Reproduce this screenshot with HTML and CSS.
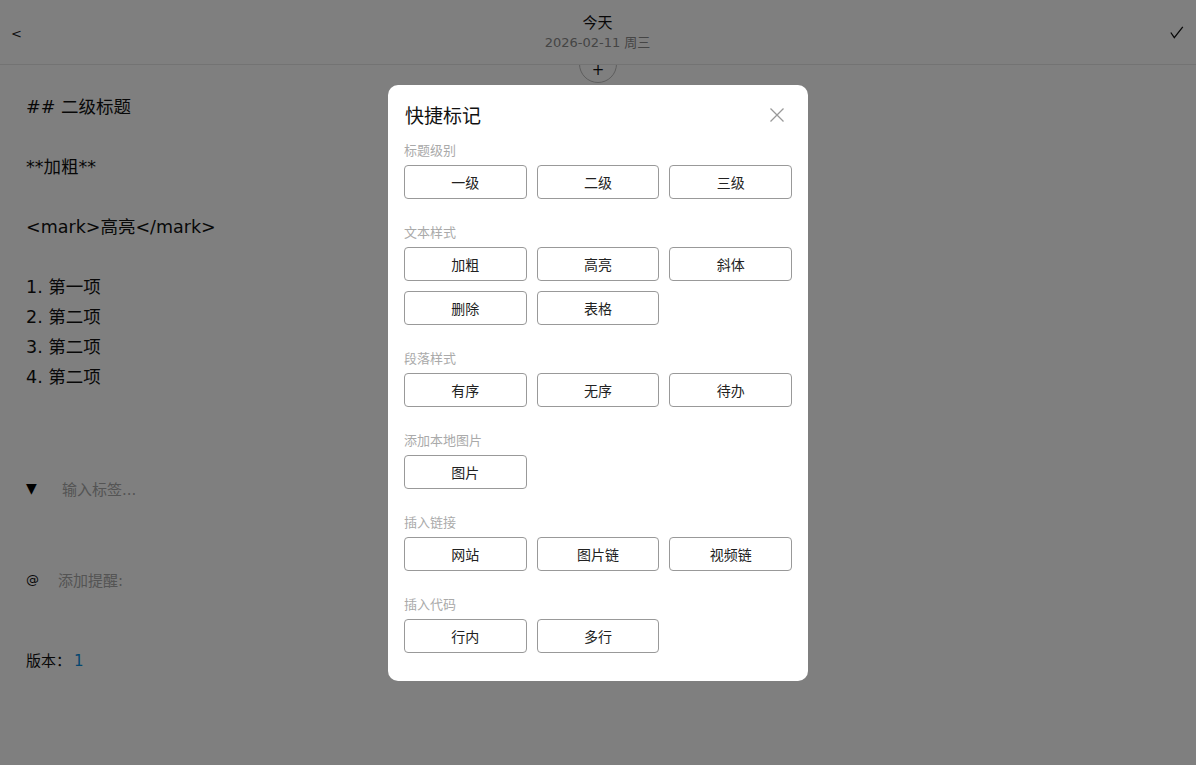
FILE: index.html
```html
<!DOCTYPE html>
<html lang="zh">
<head>
<meta charset="utf-8">
<title>今天</title>
<link rel="stylesheet" href="styles.css">
</head>
<body>
<div class="page">
  <header class="topbar">
    <span class="back">&lt;</span>
    <div class="title-wrap">
      <div class="title">今天</div>
      <div class="date">2026-02-11 周三</div>
    </div>
    <span class="done"><svg width="14" height="13" viewBox="0 0 14 13"><path d="M0.8 6.5 L4.3 11.6 L12.8 0.8" stroke="#111" stroke-width="1.3" fill="none" stroke-linejoin="miter"/></svg></span>
  </header>
  <div class="add-btn">+</div>

  <main class="content">
    <div class="editor">
      <div class="line">## 二级标题</div>
      <div class="line"></div>
      <div class="line">**加粗**</div>
      <div class="line"></div>
      <div class="line">&lt;mark&gt;高亮&lt;/mark&gt;</div>
      <div class="line"></div>
      <div class="line">1. 第一项</div>
      <div class="line">2. 第二项</div>
      <div class="line">3. 第二项</div>
      <div class="line">4. 第二项</div>
    </div>

    <div class="tag-row">
      <span class="tri">▼</span>
      <span class="placeholder">输入标签...</span>
    </div>

    <div class="remind-row">
      <span class="at">@</span>
      <span class="placeholder">添加提醒:</span>
    </div>

    <div class="version">版本：<span class="ver-num">1</span></div>
  </main>
</div>

<div class="overlay"></div>

<div class="modal">
  <div class="modal-head">
    <span class="modal-title">快捷标记</span>
    <svg class="close" width="16" height="16" viewBox="0 0 16 16"><path d="M1.5 1.5 L14.5 14.5 M14.5 1.5 L1.5 14.5" stroke="#999" stroke-width="1.3" fill="none"/></svg>
  </div>

  <section class="group first">
    <div class="group-label">标题级别</div>
    <div class="btn-grid">
      <button class="btn">一级</button>
      <button class="btn">二级</button>
      <button class="btn">三级</button>
    </div>
  </section>

  <section class="group">
    <div class="group-label">文本样式</div>
    <div class="btn-grid">
      <button class="btn">加粗</button>
      <button class="btn">高亮</button>
      <button class="btn">斜体</button>
      <button class="btn">删除</button>
      <button class="btn">表格</button>
    </div>
  </section>

  <section class="group">
    <div class="group-label">段落样式</div>
    <div class="btn-grid">
      <button class="btn">有序</button>
      <button class="btn">无序</button>
      <button class="btn">待办</button>
    </div>
  </section>

  <section class="group">
    <div class="group-label">添加本地图片</div>
    <div class="btn-grid">
      <button class="btn">图片</button>
    </div>
  </section>

  <section class="group">
    <div class="group-label">插入链接</div>
    <div class="btn-grid">
      <button class="btn">网站</button>
      <button class="btn">图片链</button>
      <button class="btn">视频链</button>
    </div>
  </section>

  <section class="group">
    <div class="group-label">插入代码</div>
    <div class="btn-grid">
      <button class="btn">行内</button>
      <button class="btn">多行</button>
    </div>
  </section>
</div>
</body>
</html>
```

FILE: styles.css
```css
* { box-sizing: border-box; }

html, body {
  margin: 0;
  padding: 0;
  background: #fff;
  font-family: "DejaVu Sans", "Noto Sans CJK SC", sans-serif;
  color: #111;
}

.page {
  position: relative;
  width: 1196px;
  height: 765px;
  overflow: hidden;
}

.topbar {
  height: 65px;
  border-bottom: 1px solid #e6e6e6;
  display: flex;
  align-items: center;
  justify-content: space-between;
  padding: 0 12px 0 11px;
  background: #fff;
  position: relative;
  z-index: 2;
}

.back {
  font-size: 13px;
  color: #222;
  width: 40px;
  padding-top: 2px;
}

.done {
  width: 40px;
  display: flex;
  justify-content: flex-end;
  padding-top: 0;
}

.title-wrap {
  display: flex;
  flex-direction: column;
  align-items: center;
  line-height: 19px;
  margin-top: 2px;
}

.title {
  font-size: 15px;
  color: #111;
}

.date {
  font-size: 13px;
  color: #8a8a8a;
}

.add-btn {
  position: absolute;
  left: 579px;
  top: 45px;
  width: 38px;
  height: 38px;
  border: 1px solid #bbb;
  border-radius: 50%;
  background: #fff;
  z-index: 1;
  display: flex;
  align-items: flex-end;
  justify-content: center;
  padding-bottom: 3px;
  font-size: 15px;
  line-height: 18px;
  color: #111;
}

.content {
  padding: 27px 26px 0 26px;
}

.editor {
  font-size: 17.5px;
  line-height: 30px;
  color: #111;
}

.line {
  height: 30px;
  white-space: pre;
}

.tag-row {
  margin-top: 81px;
  height: 30px;
  display: flex;
  align-items: center;
}

.tri {
  font-size: 14px;
  width: 36px;
  color: #000;
}

.placeholder {
  font-size: 15px;
  color: #a8a8a8;
}

.remind-row {
  margin-top: 61px;
  height: 30px;
  display: flex;
  align-items: center;
}

.at {
  font-size: 13px;
  width: 32px;
  color: #111;
}

.version {
  margin-top: 57px;
  font-size: 15px;
  line-height: 20px;
  color: #111;
}

.ver-num {
  color: #0b8ee0;
  margin-left: 3px;
}

.overlay {
  position: fixed;
  inset: 0;
  background: rgba(0, 0, 0, 0.5);
  z-index: 10;
}

.modal {
  position: fixed;
  left: 388px;
  top: 85px;
  width: 420px;
  background: #fff;
  border-radius: 10px;
  padding: 14px 16px 28px 16px;
  z-index: 11;
  font-family: "Noto Sans CJK SC", sans-serif;
}

.modal-head {
  display: flex;
  align-items: center;
  justify-content: space-between;
  height: 30px;
  padding-right: 7px;
}

.modal-title {
  font-size: 19px;
  color: #111;
  padding-left: 1px;
}

.close {
  margin-top: 2px;
}

.group-label {
  font-size: 13px;
  line-height: 20px;
  color: #aaa;
  margin-bottom: 5px;
}

.group {
  margin-top: 23px;
}

.group.first {
  margin-top: 11px;
}

.btn-grid {
  display: grid;
  grid-template-columns: repeat(3, 1fr);
  gap: 10px;
}

.btn {
  height: 34px;
  border: 1px solid #999;
  border-radius: 4px;
  background: #fff;
  font-family: inherit;
  font-size: 14px;
  color: #222;
  padding: 0;
}
```
